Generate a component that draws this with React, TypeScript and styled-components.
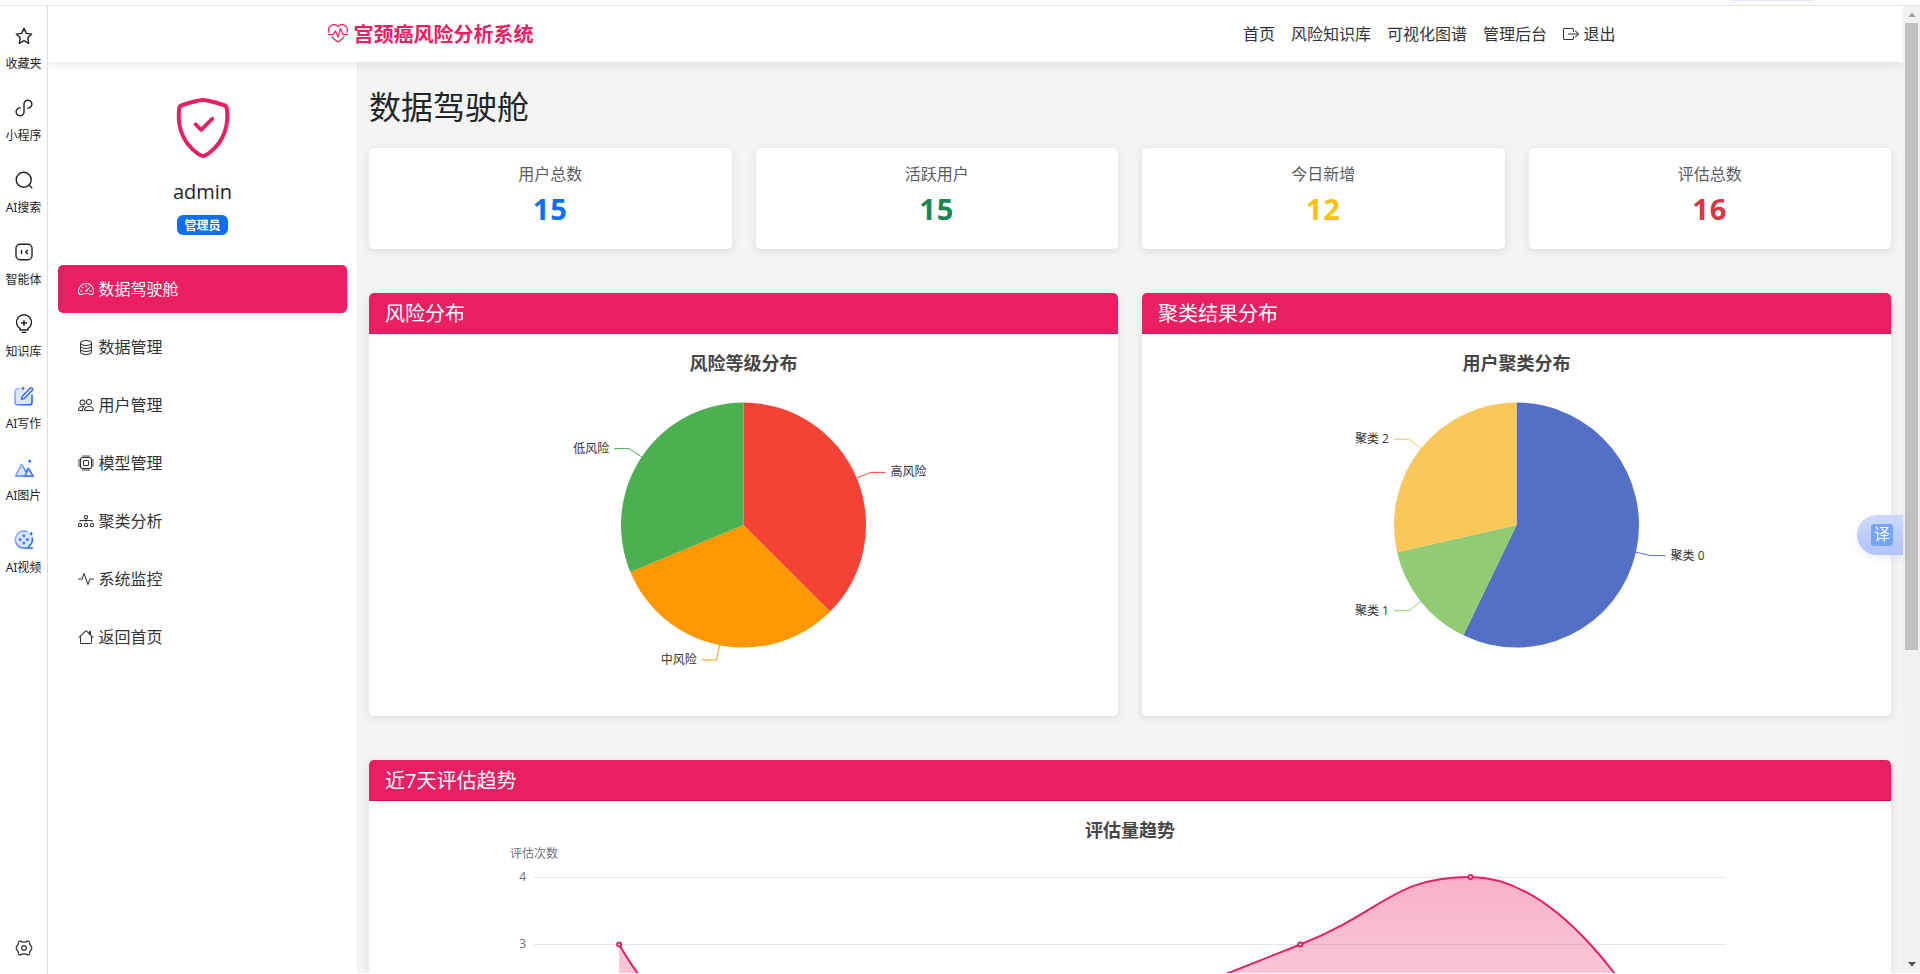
import React from 'react';
import styled, { createGlobalStyle } from 'styled-components';
import {
  BsActivity,
  BsBoxArrowRight,
  BsCpu,
  BsDatabase,
  BsDiagram3,
  BsHeartPulse,
  BsHouse,
  BsPeople,
  BsShieldCheck,
  BsSpeedometer2,
} from 'react-icons/bs';

const PINK = '#e91e63';
const FONT = '"Open Sans", "Noto Sans CJK SC", sans-serif';

const GlobalStyle = createGlobalStyle`
  * { box-sizing: border-box; }
  body {
    margin: 0;
    overflow: hidden;
    background: #fff;
    color: #212529;
    font-family: ${FONT};
    font-size: 16px;
    line-height: 1.5;
  }
  h2, h3, h5, p { margin: 0; font-weight: 400; }
  svg { display: block; flex: none; }
  svg text { font-family: ${FONT}; }
`;

/* ---------- browser frame ---------- */

const Frame = styled.div`
  display: flex;
  flex-direction: column;
  width: 100vw;
  height: 974px;
  overflow: hidden;
`;

const TopStrip = styled.div`
  flex: none;
  display: flex;
  justify-content: flex-end;
  height: 6px;
  padding-right: 107px;
  border-bottom: 1px solid #e3e3e3;
`;

const TabHint = styled.div`
  width: 82px;
  height: 1px;
  background: #e4eaff;
`;

const FrameBody = styled.div`
  flex: 1;
  display: flex;
  min-height: 0;
`;

const Rail = styled.aside`
  flex: none;
  display: flex;
  flex-direction: column;
  width: 48px;
  border-right: 1px solid #dedede;
`;

const RailItem = styled.div`
  display: flex;
  flex-direction: column;
  align-items: center;
  height: 72px;
  padding-top: 20px;
  color: #222;
  font-size: 12px;
  line-height: 18px;
  white-space: nowrap;

  svg { margin-bottom: 9px; }
`;

const RailLabel = styled.span`
  font-family: "Noto Sans", "Noto Sans CJK SC", sans-serif;
`;

const RailSettings = styled.div`
  display: flex;
  justify-content: center;
  margin-top: auto;
  padding-bottom: 17px;
`;

const Viewport = styled.div`
  flex: 1;
  display: flex;
  flex-direction: column;
  min-width: 0;
  height: 967px;
  overflow: hidden;
  background: #f4f4f4;
`;

const ScrollTrack = styled.div`
  flex: none;
  display: flex;
  flex-direction: column;
  align-items: center;
  width: 17px;
  height: 967px;
  background: #f1f1f1;
`;

const ScrollArrow = styled.div<{ $down?: boolean }>`
  display: flex;
  align-items: center;
  justify-content: center;
  height: 17px;
  margin-top: ${(p) => (p.$down ? 'auto' : 0)};
  color: ${(p) => (p.$down ? '#505050' : '#a3a3a3')};
`;

const ScrollThumb = styled.div`
  width: 13px;
  height: 627px;
  background: #c1c1c1;
`;

/* ---------- site header ---------- */

const Navbar = styled.header`
  position: relative;
  z-index: 2;
  flex: none;
  height: 56px;
  background: #fff;
  box-shadow: 0 2px 10px rgba(0, 0, 0, 0.1);
`;

const NavContainer = styled.div`
  display: flex;
  align-items: center;
  justify-content: space-between;
  width: 1320px;
  height: 56px;
  margin: 0 auto;
  padding: 0 12px;
`;

const Brand = styled.div`
  display: flex;
  align-items: center;
  gap: 6px;
  color: ${PINK};
  font-size: 20px;
  font-weight: 700;
  line-height: 30px;

  span { padding-top: 2px; }
`;

const NavLinks = styled.nav`
  display: flex;
`;

const NavLink = styled.a`
  display: flex;
  align-items: center;
  gap: 4.4px;
  padding: 0 8px;
  color: #333;
`;

/* ---------- sidebar ---------- */

const Columns = styled.div`
  flex: 1;
  display: flex;
  min-height: 0;
`;

const Sidebar = styled.aside`
  flex: none;
  display: flex;
  flex-direction: column;
  width: 309px;
  background: #fff;
  box-shadow: 0 0 4px rgba(0, 0, 0, 0.03);
`;

const Profile = styled.div`
  display: flex;
  flex-direction: column;
  align-items: center;
  height: 198px;
  padding: 36px 0 0;

  svg { color: ${PINK}; }
`;

const UserName = styled.h5`
  margin-top: 22px;
  font-size: 20px;
  line-height: 24px;
`;

const Badge = styled.span`
  margin-top: 11px;
  padding: 0 7.8px;
  height: 20px;
  border-radius: 6px;
  background: #0d6efd;
  color: #fff;
  font-size: 12px;
  font-weight: 700;
  line-height: 21px;
`;

const MenuItem = styled.a<{ $active?: boolean }>`
  display: flex;
  align-items: center;
  gap: 4.4px;
  height: 48px;
  margin: 5px 10px;
  padding: 0 20px;
  border-radius: 5px;
  background: ${(p) => (p.$active ? PINK : 'transparent')};
  color: ${(p) => (p.$active ? '#fff' : '#333')};
`;

/* ---------- dashboard ---------- */

const Main = styled.main`
  flex: 1;
  display: flex;
  flex-direction: column;
  min-width: 0;
  padding: 0 12px;

  > * { flex: none; }
`;

const PageTitle = styled.h2`
  height: 86px;
  padding-top: 25px;
  font-size: 32px;
  line-height: 40px;
`;

const StatRow = styled.div`
  display: grid;
  grid-template-columns: repeat(4, 1fr);
  gap: 24px;
`;

const Card = styled.section`
  border-radius: 5px;
  background: #fff;
  box-shadow: 0 2px 10px rgba(0, 0, 0, 0.1);
`;

const StatCard = styled(Card)`
  height: 101px;
  padding-top: 14px;
  text-align: center;
`;

const StatLabel = styled.p`
  color: #5a5d60;
  line-height: 24px;
`;

const StatValue = styled.h3<{ $color: string }>`
  margin-top: 6px;
  color: ${(p) => p.$color};
  font-size: 29px;
  font-weight: 700;
  letter-spacing: 0.8px;
  line-height: 34px;
`;

const ChartRow = styled.div`
  display: grid;
  grid-template-columns: 1fr 1fr;
  gap: 24px;
  margin: 44px 0;
`;

const CardHeader = styled.div`
  height: 41px;
  padding: 9px 16px 7px;
  border-bottom: 1px solid #c51a57;
  border-radius: 5px 5px 0 0;
  background: ${PINK};
  color: #fff;
  font-size: 20px;
  line-height: 24px;
`;

const CardBody = styled.div`
  padding: 16px;
`;

const TranslateTab = styled.div`
  position: fixed;
  z-index: 5;
  top: 515px;
  right: 17px;
  display: flex;
  align-items: center;
  width: 46px;
  height: 40px;
  padding-left: 14px;
  border-radius: 20px 0 0 20px;
  background: linear-gradient(#cbd9fd, #b3c3fd);
  box-shadow: 0 2px 8px rgba(80, 100, 200, 0.12);
`;

const TranslateGlyph = styled.span`
  width: 22px;
  height: 22px;
  border-radius: 3px;
  background: #74a5fa;
  color: #fff;
  font-size: 16px;
  line-height: 21px;
  text-align: center;
`;

/* ---------- charts ---------- */

type Slice = { name: string; value: number; color: string };

function PieChart({ title, slices }: { title: string; slices: Slice[] }) {
  const cx = 358.5;
  const cy = 175;
  const r = 122.5;
  const total = slices.reduce((sum, s) => sum + s.value, 0);
  const at = (angle: number, radius: number) => [cx + radius * Math.sin(angle), cy - radius * Math.cos(angle)];
  let angle = 0;
  return (
    <svg width="717" height="350">
      <text x={cx} y="20" fontSize="18" fontWeight="700" fill="#464646" textAnchor="middle">
        {title}
      </text>
      {slices.map((s) => {
        const start = angle;
        const end = start + (s.value / total) * Math.PI * 2;
        angle = end;
        const mid = (start + end) / 2;
        const [x0, y0] = at(start, r);
        const [x1, y1] = at(end, r);
        const [lx, ly] = at(mid, r);
        const [ex, ey] = at(mid, r + 15);
        const dir = ex > cx ? 1 : -1;
        return (
          <g key={s.name}>
            <path
              d={`M${cx} ${cy}L${x0} ${y0}A${r} ${r} 0 ${end - start > Math.PI ? 1 : 0} 1 ${x1} ${y1}Z`}
              fill={s.color}
            />
            <polyline
              points={`${lx},${ly} ${ex},${ey} ${ex + dir * 15},${ey}`}
              fill="none"
              stroke={s.color}
            />
            <text
              x={ex + dir * 20}
              y={ey + 4}
              fontSize="12"
              fill="#333"
              textAnchor={dir > 0 ? 'start' : 'end'}
            >
              {s.name}
            </text>
          </g>
        );
      })}
    </svg>
  );
}

type Pt = [number, number];

const clampBetween = (v: number, a: number, b: number) => Math.max(Math.min(v, Math.max(a, b)), Math.min(a, b));

// Cubic spline whose control points never leave the box of their segment.
function smoothPath(pts: Pt[], smooth = 0.5) {
  let d = `M${pts[0][0]} ${pts[0][1]}`;
  let cp: Pt = pts[0];
  for (let i = 1; i < pts.length; i++) {
    const prev = pts[i - 1];
    const cur = pts[i];
    const next = pts[i + 1];
    let inCp: Pt = cur;
    let outCp: Pt = cur;
    if (next) {
      const lenPrev = Math.hypot(cur[0] - prev[0], cur[1] - prev[1]);
      const lenNext = Math.hypot(next[0] - cur[0], next[1] - cur[1]);
      const ratio = lenNext / (lenNext + lenPrev);
      const vx = (next[0] - prev[0]) * smooth;
      const vy = (next[1] - prev[1]) * smooth;
      outCp = [
        clampBetween(cur[0] + vx * ratio, next[0], cur[0]),
        clampBetween(cur[1] + vy * ratio, next[1], cur[1]),
      ];
      inCp = [
        clampBetween(cur[0] - ((outCp[0] - cur[0]) * lenPrev) / lenNext, prev[0], cur[0]),
        clampBetween(cur[1] - ((outCp[1] - cur[1]) * lenPrev) / lenNext, prev[1], cur[1]),
      ];
      outCp = [
        cur[0] + ((cur[0] - inCp[0]) * lenNext) / lenPrev,
        cur[1] + ((cur[1] - inCp[1]) * lenNext) / lenPrev,
      ];
    }
    d += `C${cp[0]} ${cp[1]} ${inCp[0]} ${inCp[1]} ${cur[0]} ${cur[1]}`;
    cp = outCp;
  }
  return d;
}

const TREND = [3, 1, 1, 2, 3, 4, 2];

function TrendChart() {
  const left = 149;
  const width = 1192;
  const top = 60;
  const step = 67.5;
  const bottom = top + step * 4;
  const pts: Pt[] = TREND.map((v, i) => [left + (width / 7) * (i + 0.5), bottom - v * step]);
  const line = smoothPath(pts);
  return (
    <svg width="1490" height="390">
      <defs>
        <linearGradient id="trendFill" x1="0" y1="0" x2="0" y2="1">
          <stop offset="0" stopColor={PINK} stopOpacity="0.35" />
          <stop offset="1" stopColor={PINK} stopOpacity="0.07" />
        </linearGradient>
      </defs>
      <text x="745" y="19.5" fontSize="18" fontWeight="700" fill="#464646" textAnchor="middle">
        评估量趋势
      </text>
      <text x={left} y="41" fontSize="12" fill="#6e7079" textAnchor="middle">
        评估次数
      </text>
      {[4, 3].map((v) => {
        const y = Math.floor(bottom - v * step) + 0.5;
        return (
          <g key={v}>
            <line x1={left} x2={left + width} y1={y} y2={y} stroke="#e0e6f1" />
            <text x={left - 8} y={y + 3} fontSize="12" fill="#6e7079" textAnchor="end">
              {v}
            </text>
          </g>
        );
      })}
      <path d={`${line}L${pts[6][0]} ${bottom}L${pts[0][0]} ${bottom}Z`} fill="url(#trendFill)" />
      <path d={line} fill="none" stroke={PINK} strokeWidth="2" />
      {pts.map(([x, y]) => (
        <circle key={x} cx={x} cy={y} r="2" fill="#fff" stroke={PINK} strokeWidth="2" />
      ))}
    </svg>
  );
}

/* ---------- rail icons ---------- */

const Line = ({ children }: { children: React.ReactNode }) => (
  <svg
    width="20"
    height="20"
    viewBox="0 0 20 20"
    fill="none"
    stroke="#222"
    strokeWidth="1.4"
    strokeLinecap="round"
    strokeLinejoin="round"
  >
    {children}
  </svg>
);

const SPARK = 'c.4 1.7.8 2.1 2.5 2.5c-1.7.4-2.1.8-2.5 2.5c-.4-1.7-.8-2.1-2.5-2.5c1.7-.4 2.1-.8 2.5-2.5z';

const BlueGradient = ({ id }: { id: string }) => (
  <linearGradient id={id} x1="0" y1="0" x2="1" y2="0.6">
    <stop offset="0" stopColor="#9dbcff" />
    <stop offset="1" stopColor="#1f62ff" />
  </linearGradient>
);

const railItems: { label: string; icon: React.ReactNode }[] = [
  {
    label: '收藏夹',
    icon: (
      <Line>
        <path d="M10 2.4l2.35 4.95 5.35.75-3.9 3.75.95 5.45L10 14.7l-4.75 2.6.95-5.45L2.3 8.1l5.35-.75z" />
      </Line>
    ),
  },
  {
    label: '小程序',
    icon: (
      <Line>
        <path d="M6.2 9.9A3.95 3.95 0 1 0 10 13.9V6.1a3.95 3.95 0 1 1 3.8 4" />
      </Line>
    ),
  },
  {
    label: 'AI搜索',
    icon: (
      <Line>
        <circle cx="9.7" cy="9.7" r="7.5" />
        <path d="M15.2 15.2l2.6 2.6" />
      </Line>
    ),
  },
  {
    label: '智能体',
    icon: (
      <Line>
        <rect x="2" y="2.2" width="16" height="15.6" rx="4" />
        <path d="M7.5 8.4v3.2M13.6 8.4L11.6 10l2 1.6" />
      </Line>
    ),
  },
  {
    label: '知识库',
    icon: (
      <Line>
        <path d="M6.3 14.8a7.5 7.5 0 1 1 7.4 0M6 16h8M8 18.4h4M10 6.6v4.8M7.6 9h4.8" />
      </Line>
    ),
  },
  {
    label: 'AI写作',
    icon: (
      <svg width="20" height="20" viewBox="0 0 20 20" fill="none" strokeLinecap="round" strokeLinejoin="round">
        <defs>
          <BlueGradient id="write" />
        </defs>
        <path
          d="M5 2.8H3.2A2.2 2.2 0 0 0 1 5v11.5A2.2 2.2 0 0 0 3.2 18.700h12.600a2.200 2.200 0 0 0 2.200-2.200V9"
          fill="#dbe6ff"
          stroke="url(#write)"
          strokeWidth="1.5"
        />
        <path d="M7.500 13.200l.6-2.700L16 2.300a1.500 1.500 0 0 1 2.200 2.100l-8 8.200z" fill="#e8efff" stroke="#2b6aff" strokeWidth="1.4" />
        <path d={`M9 0${SPARK}`} fill="#1f62ff" />
      </svg>
    ),
  },
  {
    label: 'AI图片',
    icon: (
      <svg width="20" height="20" viewBox="0 0 20 20" fill="none" strokeLinecap="round" strokeLinejoin="round">
        <defs>
          <BlueGradient id="picture" />
        </defs>
        <path d="M1.500 18L7.600 6.200 12 14l2.300-3.600L19 18z" fill="#dbe6ff" stroke="url(#picture)" strokeWidth="1.5" />
        <path d="M11 18l3.300-7.600L19 18z" fill="#dbe6ff" stroke="#3a76ff" strokeWidth="1.4" />
        <path d={`M15.700 .8${SPARK}`} fill="#1f62ff" />
      </svg>
    ),
  },
  {
    label: 'AI视频',
    icon: (
      <svg width="20" height="20" viewBox="0 0 20 20" fill="none" strokeLinecap="round">
        <defs>
          <BlueGradient id="video" />
        </defs>
        <circle cx="9.800" cy="9.500" r="8.500" fill="#dbe6ff" />
        <path d="M13 1.600A8.500 8.500 0 1 0 10 18h8.500M18.200 8a8.500 8.500 0 0 1-3.600 8.400" stroke="url(#video)" strokeWidth="1.5" />
        <g fill="#3f7bff">
          <circle cx="9.800" cy="5.800" r="1.500" />
          <circle cx="6.200" cy="9.400" r="1.500" />
          <circle cx="13.400" cy="9.400" r="1.500" />
          <circle cx="9.800" cy="13" r="1.500" />
        </g>
        <path d={`M17.200 1.200${SPARK}`} fill="#1f62ff" />
      </svg>
    ),
  },
];

const menu = [
  { label: '数据驾驶舱', Icon: BsSpeedometer2 },
  { label: '数据管理', Icon: BsDatabase },
  { label: '用户管理', Icon: BsPeople },
  { label: '模型管理', Icon: BsCpu },
  { label: '聚类分析', Icon: BsDiagram3 },
  { label: '系统监控', Icon: BsActivity },
  { label: '返回首页', Icon: BsHouse },
];

const stats = [
  { label: '用户总数', value: 15, color: '#0d6efd' },
  { label: '活跃用户', value: 15, color: '#198754' },
  { label: '今日新增', value: 12, color: '#ffc107' },
  { label: '评估总数', value: 16, color: '#dc3545' },
];

const riskSlices: Slice[] = [
  { name: '高风险', value: 6, color: '#f44336' },
  { name: '中风险', value: 5, color: '#ff9800' },
  { name: '低风险', value: 5, color: '#4caf50' },
];

const clusterSlices: Slice[] = [
  { name: '聚类 0', value: 8, color: '#5470c6' },
  { name: '聚类 1', value: 2, color: '#91cc75' },
  { name: '聚类 2', value: 4, color: '#fac858' },
];

export default function App() {
  return (
    <Frame>
      <GlobalStyle />
      <TopStrip>
        <TabHint />
      </TopStrip>
      <FrameBody>
        <Rail>
          {railItems.map((item) => (
            <RailItem key={item.label}>
              {item.icon}
              <RailLabel>{item.label}</RailLabel>
            </RailItem>
          ))}
          <RailSettings>
            <svg width="18" height="18" viewBox="0 0 18 18" fill="none" stroke="#444" strokeWidth="1.4" strokeLinejoin="round">
              <path d="M5.300 1.900L7 3h4l1.700-1.100 1.900 1.100.1 2.200L16.600 8v2l-1.900 2.800-.1 2.200-1.900 1.100L11 15H7l-1.700 1.100L3.400 15l-.1-2.200L1.400 10V8l1.900-2.800.1-2.200z" />
              <circle cx="9" cy="9" r="2.300" />
            </svg>
          </RailSettings>
        </Rail>
        <Viewport>
          <Navbar>
            <NavContainer>
              <Brand>
                <BsHeartPulse size={20} />
                <span>宫颈癌风险分析系统</span>
              </Brand>
              <NavLinks>
                <NavLink>首页</NavLink>
                <NavLink>风险知识库</NavLink>
                <NavLink>可视化图谱</NavLink>
                <NavLink>管理后台</NavLink>
                <NavLink>
                  <BsBoxArrowRight size={16} />
                  退出
                </NavLink>
              </NavLinks>
            </NavContainer>
          </Navbar>
          <Columns>
            <Sidebar>
              <Profile>
                <BsShieldCheck size={60} />
                <UserName>admin</UserName>
                <Badge>管理员</Badge>
              </Profile>
              {menu.map(({ label, Icon }, i) => (
                <MenuItem key={label} $active={i === 0}>
                  <Icon size={16} />
                  {label}
                </MenuItem>
              ))}
            </Sidebar>
            <Main>
              <PageTitle>数据驾驶舱</PageTitle>
              <StatRow>
                {stats.map((s) => (
                  <StatCard key={s.label}>
                    <StatLabel>{s.label}</StatLabel>
                    <StatValue $color={s.color}>{s.value}</StatValue>
                  </StatCard>
                ))}
              </StatRow>
              <ChartRow>
                <Card>
                  <CardHeader>风险分布</CardHeader>
                  <CardBody>
                    <PieChart title="风险等级分布" slices={riskSlices} />
                  </CardBody>
                </Card>
                <Card>
                  <CardHeader>聚类结果分布</CardHeader>
                  <CardBody>
                    <PieChart title="用户聚类分布" slices={clusterSlices} />
                  </CardBody>
                </Card>
              </ChartRow>
              <Card>
                <CardHeader>近7天评估趋势</CardHeader>
                <CardBody>
                  <TrendChart />
                </CardBody>
              </Card>
            </Main>
          </Columns>
        </Viewport>
        <ScrollTrack>
          <ScrollArrow>
            <svg width="8" height="5" viewBox="0 0 8 5" fill="currentColor">
              <path d="M0 5L4 0.500L8 5z" />
            </svg>
          </ScrollArrow>
          <ScrollThumb />
          <ScrollArrow $down>
            <svg width="8" height="5" viewBox="0 0 8 5" fill="currentColor">
              <path d="M0 0L4 4.500L8 0z" />
            </svg>
          </ScrollArrow>
        </ScrollTrack>
      </FrameBody>
      <TranslateTab>
        <TranslateGlyph>译</TranslateGlyph>
      </TranslateTab>
    </Frame>
  );
}
